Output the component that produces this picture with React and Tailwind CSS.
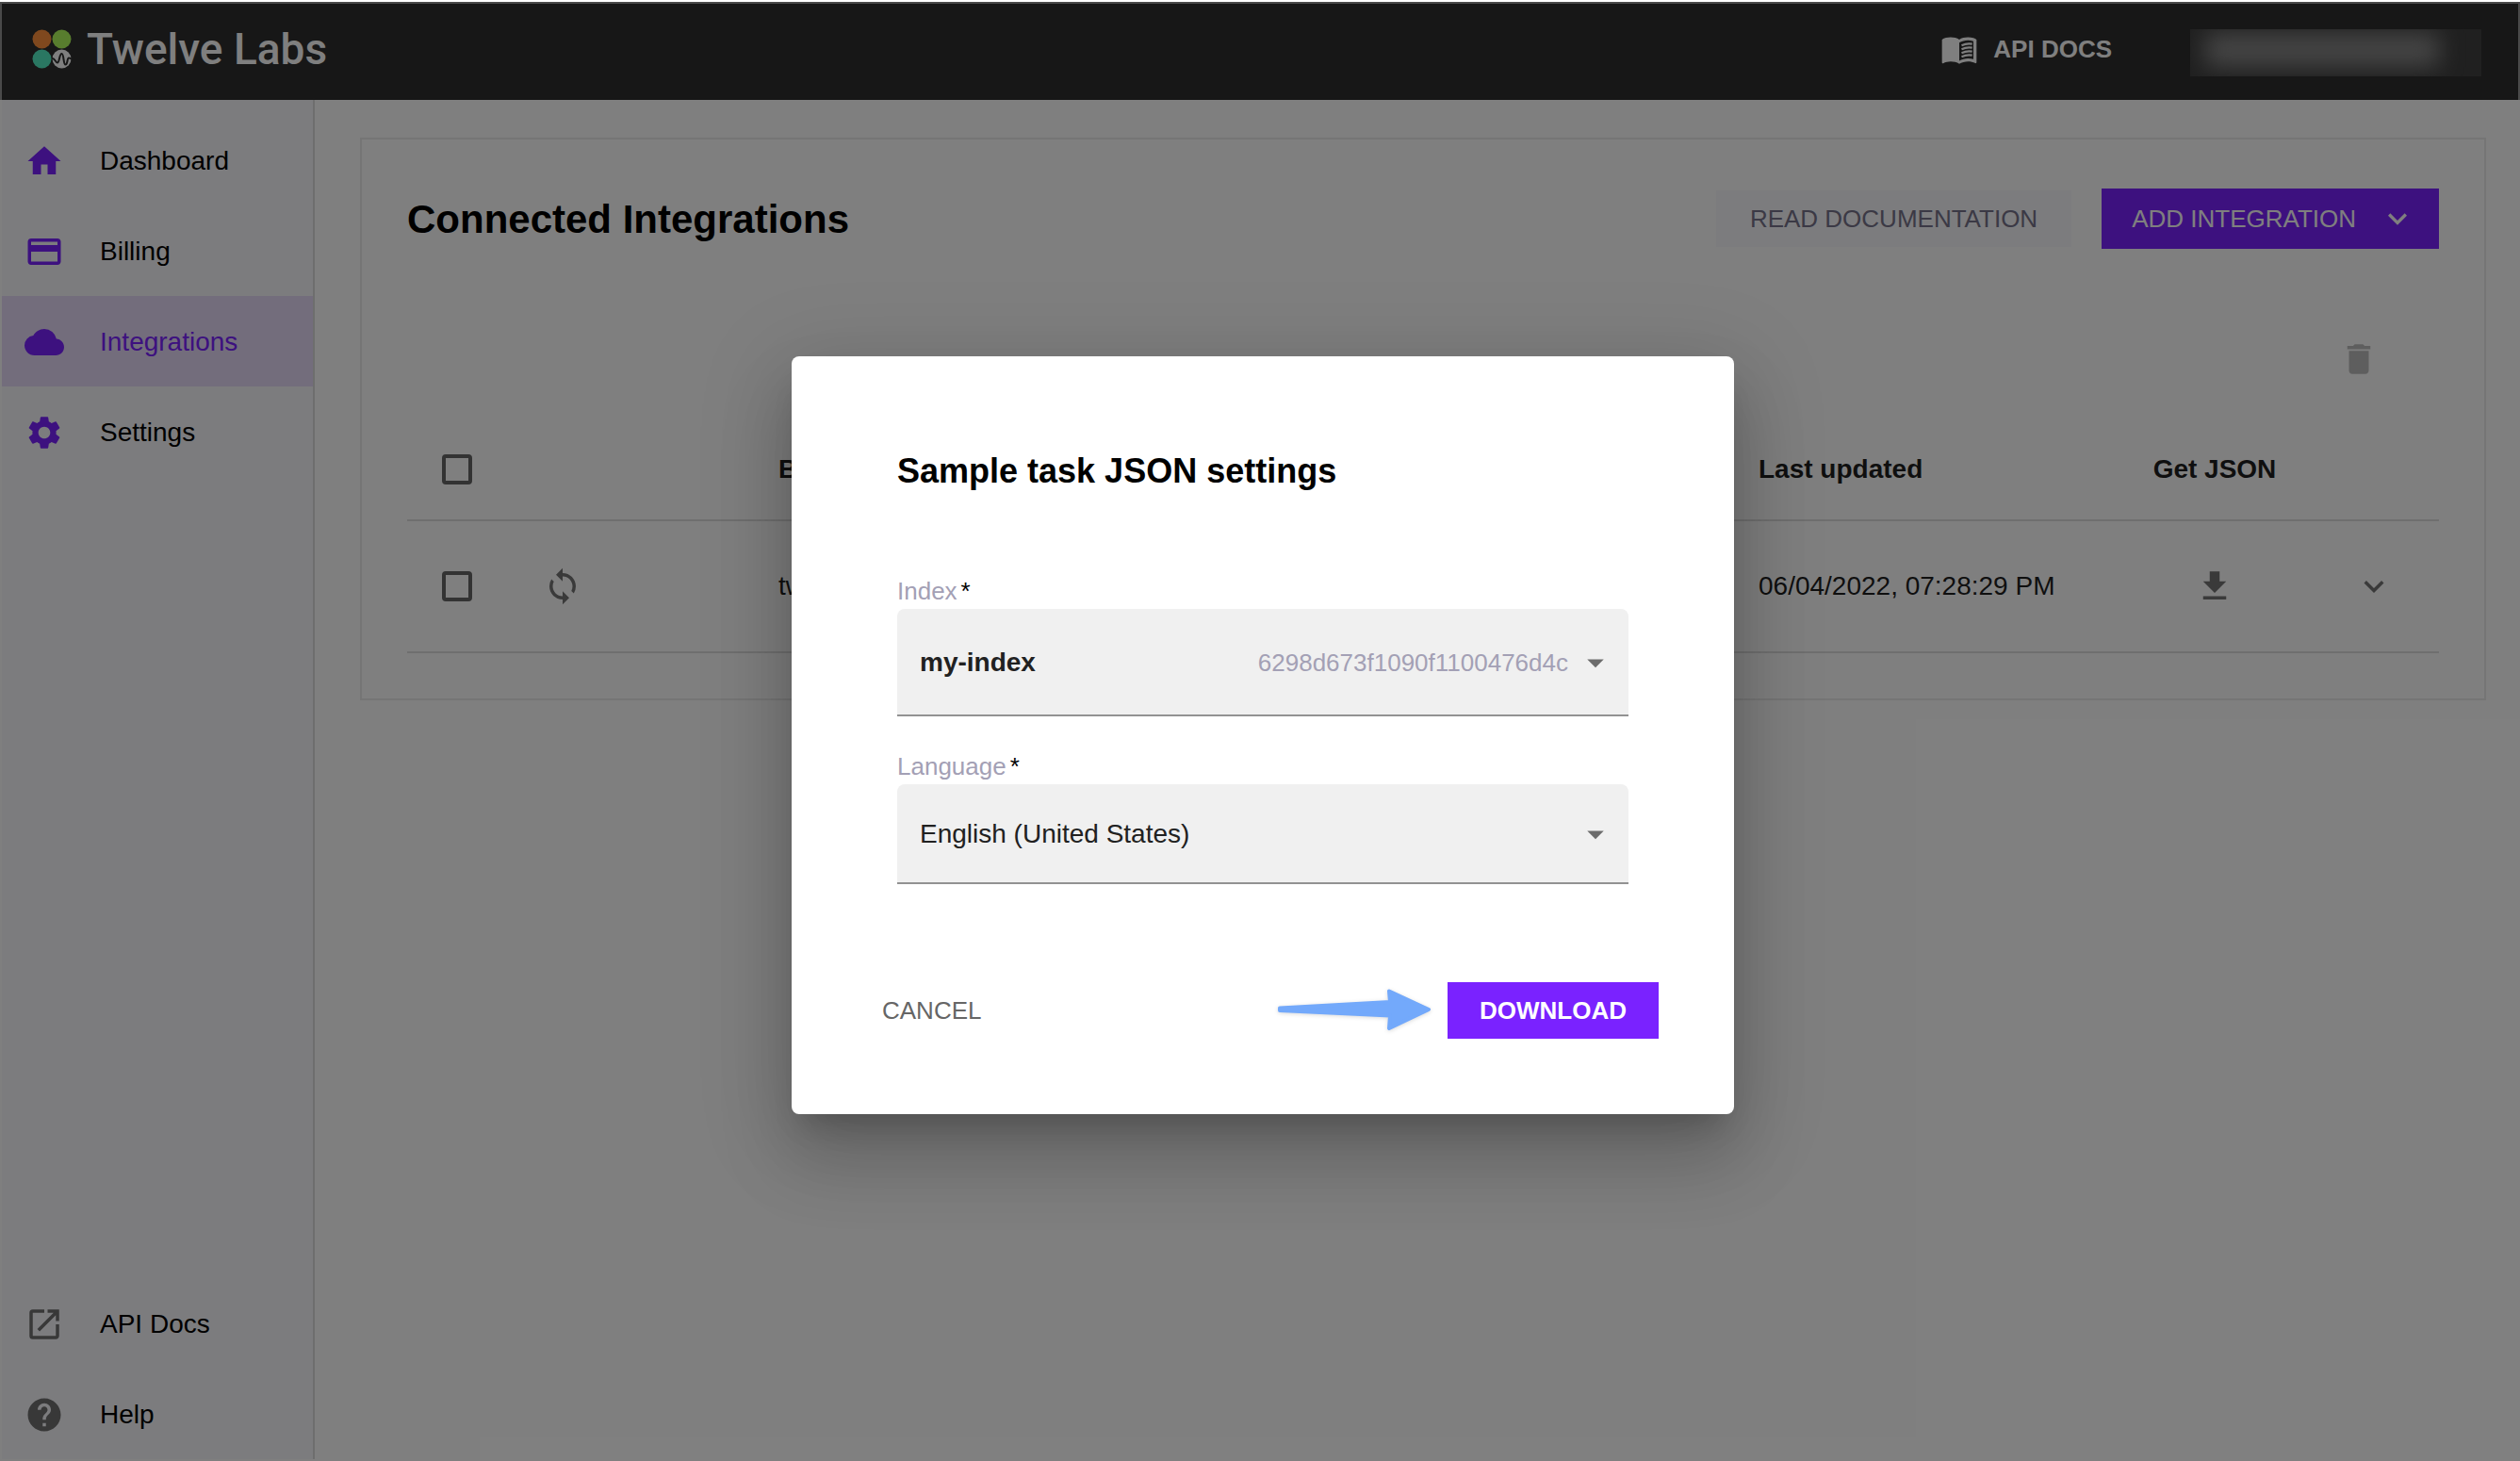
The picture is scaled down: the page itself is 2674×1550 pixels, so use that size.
import React from "react";
import {
  MdHome,
  MdCloud,
  MdSettings,
  MdHelp,
  MdSync,
  MdGetApp,
  MdDelete,
  MdArrowDropDown,
  MdExpandMore,
  MdOpenInNew,
} from "react-icons/md";

function CardIcon() {
  return (
    <svg viewBox="0 0 24 24" className="size-[42px]" fill="currentColor" aria-hidden="true">
      <path d="M20 4H4c-1.11 0-1.99.89-1.99 2L2 18c0 1.11.89 2 2 2h16c1.11 0 2-.89 2-2V6c0-1.11-.89-2-2-2zm0 14H4v-6h16v6zm0-10H4V6h16v2z" />
    </svg>
  );
}

function BookIcon() {
  return (
    <svg viewBox="0 0 24 24" className="size-10" fill="currentColor" aria-hidden="true">
      <path d="M21 5c-1.11-.35-2.33-.5-3.5-.5-1.95 0-4.05.4-5.5 1.5-1.45-1.1-3.55-1.5-5.5-1.5S2.45 4.9 1 6v14.65c0 .25.25.5.5.5.1 0 .15-.05.25-.05C3.1 20.45 5.05 20 6.5 20c1.95 0 4.05.4 5.5 1.5 1.35-.85 3.8-1.5 5.5-1.5 1.65 0 3.35.3 4.75 1.05.1.05.15.05.25.05.25 0 .5-.25.5-.5V6c-.6-.45-1.25-.75-2-1zm0 13.5c-1.1-.35-2.3-.5-3.5-.5-1.7 0-4.15.65-5.5 1.5V8c1.35-.85 3.8-1.5 5.5-1.5 1.2 0 2.4.15 3.5.5v11.5z" />
      <path
        d="M13.500 9.700q3.200-1.500 6.700-.9M13.500 12.100q3.200-1.500 6.700-.9M13.500 14.500q3.200-1.500 6.700-.9M13.500 16.900q3.200-1.500 6.700-.9"
        fill="none"
        stroke="currentColor"
        strokeWidth="1.300"
      />
    </svg>
  );
}

function Logo() {
  return (
    <svg viewBox="0 0 42 42" className="size-[42px]" aria-hidden="true">
      <circle cx="10.5" cy="10.5" r="10" fill="#ff903c" />
      <circle cx="31.5" cy="10.5" r="10" fill="#b0fa5c" />
      <circle cx="10.5" cy="31.5" r="10" fill="#54eec4" />
      <circle cx="31.5" cy="31.5" r="10" fill="#ffffff" />
      <path
        d="M21 31c3-1 4 4.500 6 4.500s2-9.500 4.500-9.500 1.500 11.500 4 11.500 1.500-7 3.500-7 1.500 1 3 1"
        fill="none"
        stroke="#2e2e2e"
        strokeWidth="2"
      />
    </svg>
  );
}

function PointerArrow() {
  return (
    <svg viewBox="0 0 166 48" className="h-12 w-[166px] drop-shadow-sm" aria-hidden="true">
      <path
        d="M4 22.500 121 16 120 4.500 162 24 120 44 121 30.500 4 25Z"
        fill="#73a9fb"
        stroke="#73a9fb"
        strokeWidth="4"
        strokeLinejoin="round"
        transform="translate(0 -1)"
      />
    </svg>
  );
}

const mainNav = [
  { label: "Dashboard", icon: <MdHome className="size-[42px]" /> },
  { label: "Billing", icon: <CardIcon /> },
  { label: "Integrations", icon: <MdCloud className="size-[42px]" />, active: true },
  { label: "Settings", icon: <MdSettings className="size-[42px]" /> },
];

const helpNav = [
  { label: "API Docs", icon: <MdOpenInNew className="size-[42px]" /> },
  { label: "Help", icon: <MdHelp className="size-[42px]" /> },
];

function NavItem({ label, icon, active, iconColor }) {
  return (
    <li>
      <a
        href="#"
        aria-current={active ? "page" : undefined}
        className={`flex h-24 items-center gap-[38px] pt-0.5 pl-6 ${active ? "bg-[#e6daf8] text-[#7a22ff]" : "text-black"}`}
      >
        <span className={iconColor}>{icon}</span>
        {label}
      </a>
    </li>
  );
}

function Checkbox({ label }) {
  return (
    <input
      type="checkbox"
      aria-label={label}
      className="block size-8 appearance-none rounded-sm border-4 border-[#666666] checked:bg-[#7a22ff]"
    />
  );
}

function SelectField({ id, label, value, hint, className }) {
  return (
    <div>
      <label htmlFor={id} className="flex gap-1 text-[26px] leading-[38px] text-[#a3a0b5]">
        {label}
        <span className="text-black">*</span>
      </label>
      <div className="relative">
        <select
          id={id}
          className={`block w-full appearance-none rounded-t-lg border-b-2 border-[#929292] bg-[#f0f0f0] px-6 pt-0.5 text-[28px] text-[#212121] ${className}`}
        >
          <option>{value}</option>
        </select>
        <div className="pointer-events-none absolute inset-y-0 right-3.5 flex items-center gap-2 text-[26px] text-[#a3a0b5]">
          {hint}
          <MdArrowDropDown className="size-[42px] text-[#6c6c6c]" />
        </div>
      </div>
    </div>
  );
}

export default function App() {
  return (
    <div className="relative flex min-h-screen flex-col bg-white pt-0.5 font-['Liberation_Sans',Arial,sans-serif] text-[28px] text-black">
      <header className="flex h-[104px] items-center justify-between border-x-2 border-t-2 border-[#949494] bg-[#2e2e2e] pr-[39px] pb-1.5 pl-8 text-white">
        <a href="#" className="flex items-center gap-4">
          <Logo />
          <span className="font-[Roboto,sans-serif] text-[46px] leading-none font-medium">Twelve Labs</span>
        </a>
        <div className="flex items-center gap-[83px]">
          <a href="#" className="flex items-center gap-4 text-[26px] font-bold">
            <BookIcon />
            API DOCS
          </a>
          <button
            type="button"
            aria-label="Account"
            className="relative mt-2 h-[50px] w-[309px] overflow-hidden bg-[#404040]"
          >
            <span className="absolute top-1 left-4 block h-9 w-[248px] bg-[#8a8a8a] blur-md" />
          </button>
        </div>
      </header>

      <div className="mx-0.5 mb-0.5 flex flex-1">
        <nav className="flex w-[332px] shrink-0 flex-col justify-between border-r-2 border-[#dcdcdc] bg-[#f8f8fc] pt-4">
          <ul>
            {mainNav.map((item) => (
              <NavItem key={item.label} {...item} iconColor="text-[#7a22ff]" />
            ))}
          </ul>
          <ul>
            {helpNav.map((item) => (
              <NavItem key={item.label} {...item} iconColor="text-[#707070]" />
            ))}
          </ul>
        </nav>

        <main className="flex-1 pt-10 pr-[34px] pl-12">
          <section className="border-2 border-[#ebebeb] px-12 pt-[52px] pb-12">
            <div className="flex items-center justify-between">
              <h1 className="text-[42px] font-bold">Connected Integrations</h1>
              <div className="flex items-center gap-8 text-[26px]">
                <a href="#" className="flex h-[60px] items-center bg-[#f8f8fc] px-9 text-[#76738a]">
                  READ DOCUMENTATION
                </a>
                <button type="button" className="flex h-16 items-center gap-6 bg-[#7a22ff] pr-6 pl-8 text-white">
                  ADD INTEGRATION
                  <MdExpandMore className="size-10" />
                </button>
              </div>
            </div>

            <div className="mt-[54px] flex h-[126px] items-center justify-end pr-16">
              <button type="button" aria-label="Delete" disabled className="text-[#bdbdbd]">
                <MdDelete className="size-[42px]" />
              </button>
            </div>

            <table className="w-full table-fixed text-left text-[#1f1f1f]">
              <colgroup>
                <col className="w-[116px]" />
                <col className="w-[250px]" />
                <col />
                <col className="w-[412px]" />
                <col className="w-[200px]" />
                <col className="w-[138px]" />
              </colgroup>
              <thead>
                <tr className="h-[108px] border-b-2 border-[#dedede]">
                  <th className="pl-[37px]">
                    <Checkbox label="Select all" />
                  </th>
                  <th />
                  <th className="px-7">B</th>
                  <th className="px-7">Last updated</th>
                  <th className="text-center">Get JSON</th>
                  <th />
                </tr>
              </thead>
              <tbody>
                <tr className="h-[140px] border-b-2 border-[#dedede]">
                  <td className="pl-[37px]">
                    <Checkbox label="Select row" />
                  </td>
                  <td className="px-7 text-[#757575]">
                    <MdSync className="size-[42px]" />
                  </td>
                  <td className="px-7">tw</td>
                  <td className="px-7">06/04/2022, 07:28:29 PM</td>
                  <td className="text-[#757575]">
                    <button type="button" aria-label="Get JSON" className="mx-auto block">
                      <MdGetApp className="size-[42px]" />
                    </button>
                  </td>
                  <td className="text-[#757575]">
                    <button type="button" aria-label="Expand row" className="mx-auto block">
                      <MdExpandMore className="size-[42px]" />
                    </button>
                  </td>
                </tr>
              </tbody>
            </table>
          </section>
        </main>
      </div>

      <div className="absolute inset-x-0 top-0.5 bottom-0 flex items-center justify-center bg-black/50 pt-2 pl-1.5">
        <div
          role="dialog"
          aria-labelledby="dialog-title"
          className="w-[1000px] rounded-lg bg-white pt-[100px] pb-20 shadow-[0_22px_30px_-14px_rgba(0,0,0,0.2),0_48px_76px_6px_rgba(0,0,0,0.14),0_18px_92px_16px_rgba(0,0,0,0.12)]"
        >
          <div className="px-28">
            <h2 id="dialog-title" className="text-[36px] leading-[44px] font-bold">
              Sample task JSON settings
            </h2>
            <div className="mt-[86px] flex flex-col gap-[34px]">
              <SelectField
                id="index"
                label="Index"
                value="my-index"
                hint="6298d673f1090f1100476d4c"
                className="h-[114px] font-bold"
              />
              <SelectField id="language" label="Language" value="English (United States)" className="h-[106px]" />
            </div>
          </div>
          <div className="mt-[104px] flex items-center justify-between px-20 text-[26px]">
            <button type="button" className="h-[60px] px-4 text-[#666666]">
              CANCEL
            </button>
            <div className="flex items-center gap-4">
              <PointerArrow />
              <button type="button" className="h-[60px] w-56 bg-[#7a22ff] font-bold text-white">
                DOWNLOAD
              </button>
            </div>
          </div>
        </div>
      </div>
    </div>
  );
}
